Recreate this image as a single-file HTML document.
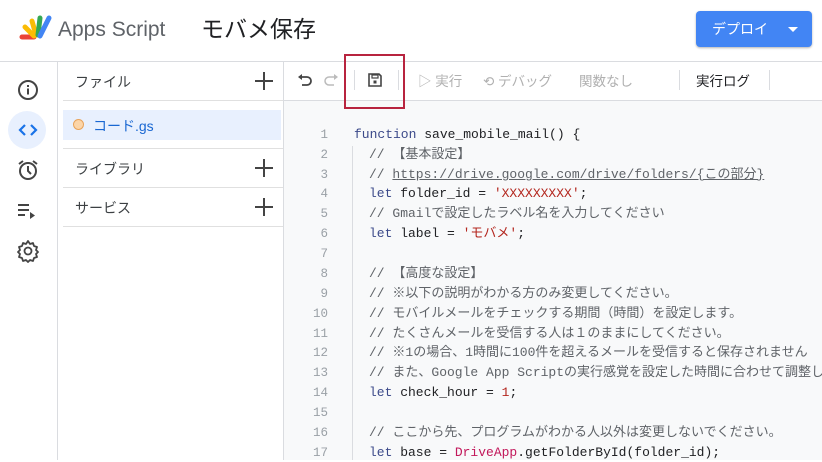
<!DOCTYPE html>
<html><head><meta charset="utf-8"><style>
*{margin:0;padding:0;box-sizing:border-box}
body{width:822px;height:460px;overflow:hidden;background:#fff;font-family:"Liberation Sans","Noto Sans CJK JP",sans-serif;position:relative;color:#3c4043}
.a{position:absolute}
.mono{font-family:"Liberation Mono","Noto Sans CJK JP",monospace;font-size:13px}
.ln{position:absolute;left:290px;width:38px;text-align:right;color:#9aa0a6;font-size:12.5px;font-family:"Liberation Mono",monospace;line-height:18px}
.cd{position:absolute;white-space:pre;color:#202124;line-height:18px;height:18px}
.c{color:#5f6368}
.s{color:#b3261e}
.k{color:#3c4a8a}
.plus{position:absolute;left:255px;width:18px;height:18px}
.plus:before{content:"";position:absolute;left:8px;top:0;width:2px;height:18px;background:#444}
.plus:after{content:"";position:absolute;left:0;top:8px;width:18px;height:2px;background:#444}
</style></head><body>
<svg class="a" style="left:18px;top:14px" width="36" height="28" viewBox="0 0 36 28">
<g stroke-linecap="round" stroke-width="5" fill="none">
<path d="M4 23 L16 23" stroke="#ea4335"/>
<path d="M7 13 L16 22" stroke="#fbbc04"/>
<path d="M14 7 L18 21" stroke="#fbbc04"/>
<path d="M22 4 L20 21" stroke="#34a853"/>
<path d="M31 4 L22 22" stroke="#4285f4"/>
</g></svg>
<div class="a" style="left:58px;top:18px;font-size:21px;color:#5f6368">Apps Script</div>
<div class="a" style="left:201px;top:10px;font-size:23px;color:#202124">モバメ保存</div>
<div class="a" style="left:696px;top:11px;width:116px;height:36px;background:#4285f4;border-radius:4px;box-shadow:0 1px 2px rgba(0,0,0,.3);color:#fff;font-size:14px;line-height:36px;padding-left:16px">デプロイ<span style="position:absolute;left:92px;top:16px;border-left:5px solid transparent;border-right:5px solid transparent;border-top:5px solid #fff"></span></div>
<div class="a" style="left:0;top:61px;width:822px;height:1px;background:#dadce0"></div>
<div class="a" style="left:57px;top:62px;width:1px;height:398px;background:#dadce0"></div>
<svg class="a" style="left:17px;top:79px" width="22" height="22" viewBox="0 0 22 22"><circle cx="11" cy="11" r="9" fill="none" stroke="#444" stroke-width="2"/><rect x="10" y="9.5" width="2" height="6" fill="#444"/><rect x="10" y="6" width="2" height="2" fill="#444"/></svg>
<div class="a" style="left:8px;top:111px;width:38px;height:38px;border-radius:50%;background:#e8f0fe"></div>
<svg class="a" style="left:17px;top:120px" width="22" height="20" viewBox="0 0 22 20"><path d="M8 5 L3 10 L8 15 M14 5 L19 10 L14 15" fill="none" stroke="#1a73e8" stroke-width="2.2"/></svg>
<svg class="a" style="left:16px;top:158px" width="24" height="24" viewBox="0 0 24 24"><circle cx="12" cy="13" r="8" fill="none" stroke="#444" stroke-width="2"/><path d="M12 8v5l3 3M3 6l4-3M21 6l-4-3" fill="none" stroke="#444" stroke-width="2"/></svg>
<svg class="a" style="left:17px;top:202px" width="22" height="18" viewBox="0 0 22 18"><path d="M1 3h11M1 8h11M1 13h7" stroke="#444" stroke-width="2"/><path d="M13 10l5 3.5-5 3.5z" fill="#444"/></svg>
<svg class="a" style="left:16px;top:239px" width="24" height="24" viewBox="0 0 24 24"><path d="M12 2l2 3 3-1 1 3 3 1-1 3 2 2-2 2 1 3-3 1-1 3-3-1-2 2-2-2-3 1-1-3-3-1 1-3-2-2 2-2-1-3 3-1 1-3 3 1z" fill="none" stroke="#444" stroke-width="1.8" stroke-linejoin="round"/><circle cx="12" cy="12" r="3.5" fill="none" stroke="#444" stroke-width="1.8"/></svg>
<div class="a" style="left:283px;top:62px;width:1px;height:398px;background:#dadce0"></div>
<div class="a" style="left:75px;top:72px;font-size:14px">ファイル</div><div class="plus" style="top:72px"></div>
<div class="a" style="left:63px;top:100px;width:220px;height:1px;background:#e0e0e0"></div>
<div class="a" style="left:63px;top:110px;width:218px;height:30px;background:#e8f0fe"></div>
<div class="a" style="left:73px;top:119px;width:11px;height:11px;border-radius:50%;background:#fcd5a8;border:1px solid #e8a35a"></div>
<div class="a" style="left:93px;top:116px;font-size:14px;color:#1967d2">コード.gs</div>
<div class="a" style="left:63px;top:148px;width:220px;height:1px;background:#e0e0e0"></div>
<div class="a" style="left:75px;top:159px;font-size:14px">ライブラリ</div><div class="plus" style="top:159px"></div>
<div class="a" style="left:63px;top:187px;width:220px;height:1px;background:#e0e0e0"></div>
<div class="a" style="left:75px;top:198px;font-size:14px">サービス</div><div class="plus" style="top:198px"></div>
<div class="a" style="left:63px;top:226px;width:220px;height:1px;background:#e0e0e0"></div>
<div class="a" style="left:284px;top:101px;width:538px;height:359px;background:#f8f9fa"></div>
<div class="a" style="left:284px;top:100px;width:538px;height:1px;background:#dadce0"></div>
<svg class="a" style="left:297px;top:72px" width="16" height="16" viewBox="0 0 16 16"><path d="M3 5h7a4 4 0 010 8H5" fill="none" stroke="#444" stroke-width="1.8"/><path d="M1 5l4-3v6z" fill="#444"/></svg>
<svg class="a" style="left:323px;top:72px" width="16" height="16" viewBox="0 0 16 16"><path d="M13 5H6a4 4 0 000 8h5" fill="none" stroke="#bbb" stroke-width="1.5"/><path d="M15 5l-4-3v6z" fill="#bbb"/></svg>
<div class="a" style="left:354px;top:70px;width:1px;height:20px;background:#dadce0"></div>
<svg class="a" style="left:367px;top:72px" width="16" height="16" viewBox="0 0 16 16"><path d="M2 2h10l2 2v10H2z" fill="none" stroke="#444" stroke-width="1.6"/><rect x="5" y="3" width="6" height="3" fill="none" stroke="#444" stroke-width="1.2"/><rect x="6.5" y="8.5" width="3" height="3" fill="#444"/></svg>
<div class="a" style="left:398px;top:70px;width:1px;height:20px;background:#dadce0"></div>
<div class="a" style="left:344px;top:54px;width:61px;height:55px;border:2px solid #b8243f"></div>
<div class="a" style="left:418px;top:70px;font-size:13.5px;color:#b0b0b0">▷ 実行</div>
<div class="a" style="left:483px;top:70px;font-size:13.5px;color:#b0b0b0">⟲ デバッグ</div>
<div class="a" style="left:579px;top:70px;font-size:13.5px;color:#b0b0b0">関数なし</div>
<div class="a" style="left:679px;top:70px;width:1px;height:20px;background:#dadce0"></div>
<div class="a" style="left:696px;top:70px;font-size:13.5px;color:#202124">実行ログ</div>
<div class="a" style="left:769px;top:70px;width:1px;height:20px;background:#dadce0"></div>
<div class="a" style="left:352px;top:146px;width:1px;height:314px;background:#dadce0"></div>
<div class="mono">
<div class="ln" style="top:126px">1</div><div class="ln" style="top:146px">2</div><div class="ln" style="top:166px">3</div><div class="ln" style="top:185px">4</div><div class="ln" style="top:205px">5</div><div class="ln" style="top:225px">6</div><div class="ln" style="top:245px">7</div><div class="ln" style="top:265px">8</div><div class="ln" style="top:285px">9</div><div class="ln" style="top:305px">10</div><div class="ln" style="top:325px">11</div><div class="ln" style="top:344px">12</div><div class="ln" style="top:364px">13</div><div class="ln" style="top:384px">14</div><div class="ln" style="top:404px">15</div><div class="ln" style="top:424px">16</div><div class="ln" style="top:444px">17</div>
<div class="cd" style="left:354px;top:126px"><span class="k">function</span> save_mobile_mail() {</div>
<div class="cd c" style="left:369px;top:146px">// 【基本設定】</div>
<div class="cd c" style="left:369px;top:166px">// <span style="text-decoration:underline">https://drive.google.com/drive/folders/{この部分}</span></div>
<div class="cd" style="left:369px;top:185px"><span class="k">let</span> folder_id = <span class="s">'XXXXXXXXX'</span>;</div>
<div class="cd c" style="left:369px;top:205px">// Gmailで設定したラベル名を入力してください</div>
<div class="cd" style="left:369px;top:225px"><span class="k">let</span> label = <span class="s">'モバメ'</span>;</div>
<div class="cd c" style="left:369px;top:265px">// 【高度な設定】</div>
<div class="cd c" style="left:369px;top:285px">// ※以下の説明がわかる方のみ変更してください。</div>
<div class="cd c" style="left:369px;top:305px">// モバイルメールをチェックする期間（時間）を設定します。</div>
<div class="cd c" style="left:369px;top:325px">// たくさんメールを受信する人は１のままにしてください。</div>
<div class="cd c" style="left:369px;top:344px">// ※1の場合、1時間に100件を超えるメールを受信すると保存されません</div>
<div class="cd c" style="left:369px;top:364px">// また、Google App Scriptの実行感覚を設定した時間に合わせて調整し</div>
<div class="cd" style="left:369px;top:384px"><span class="k">let</span> check_hour = <span class="s">1</span>;</div>
<div class="cd c" style="left:369px;top:424px">// ここから先、プログラムがわかる人以外は変更しないでください。</div>
<div class="cd" style="left:369px;top:444px"><span class="k">let</span> base = <span style="color:#c2185b">DriveApp</span>.getFolderById(folder_id);</div>
</div>
</body></html>
